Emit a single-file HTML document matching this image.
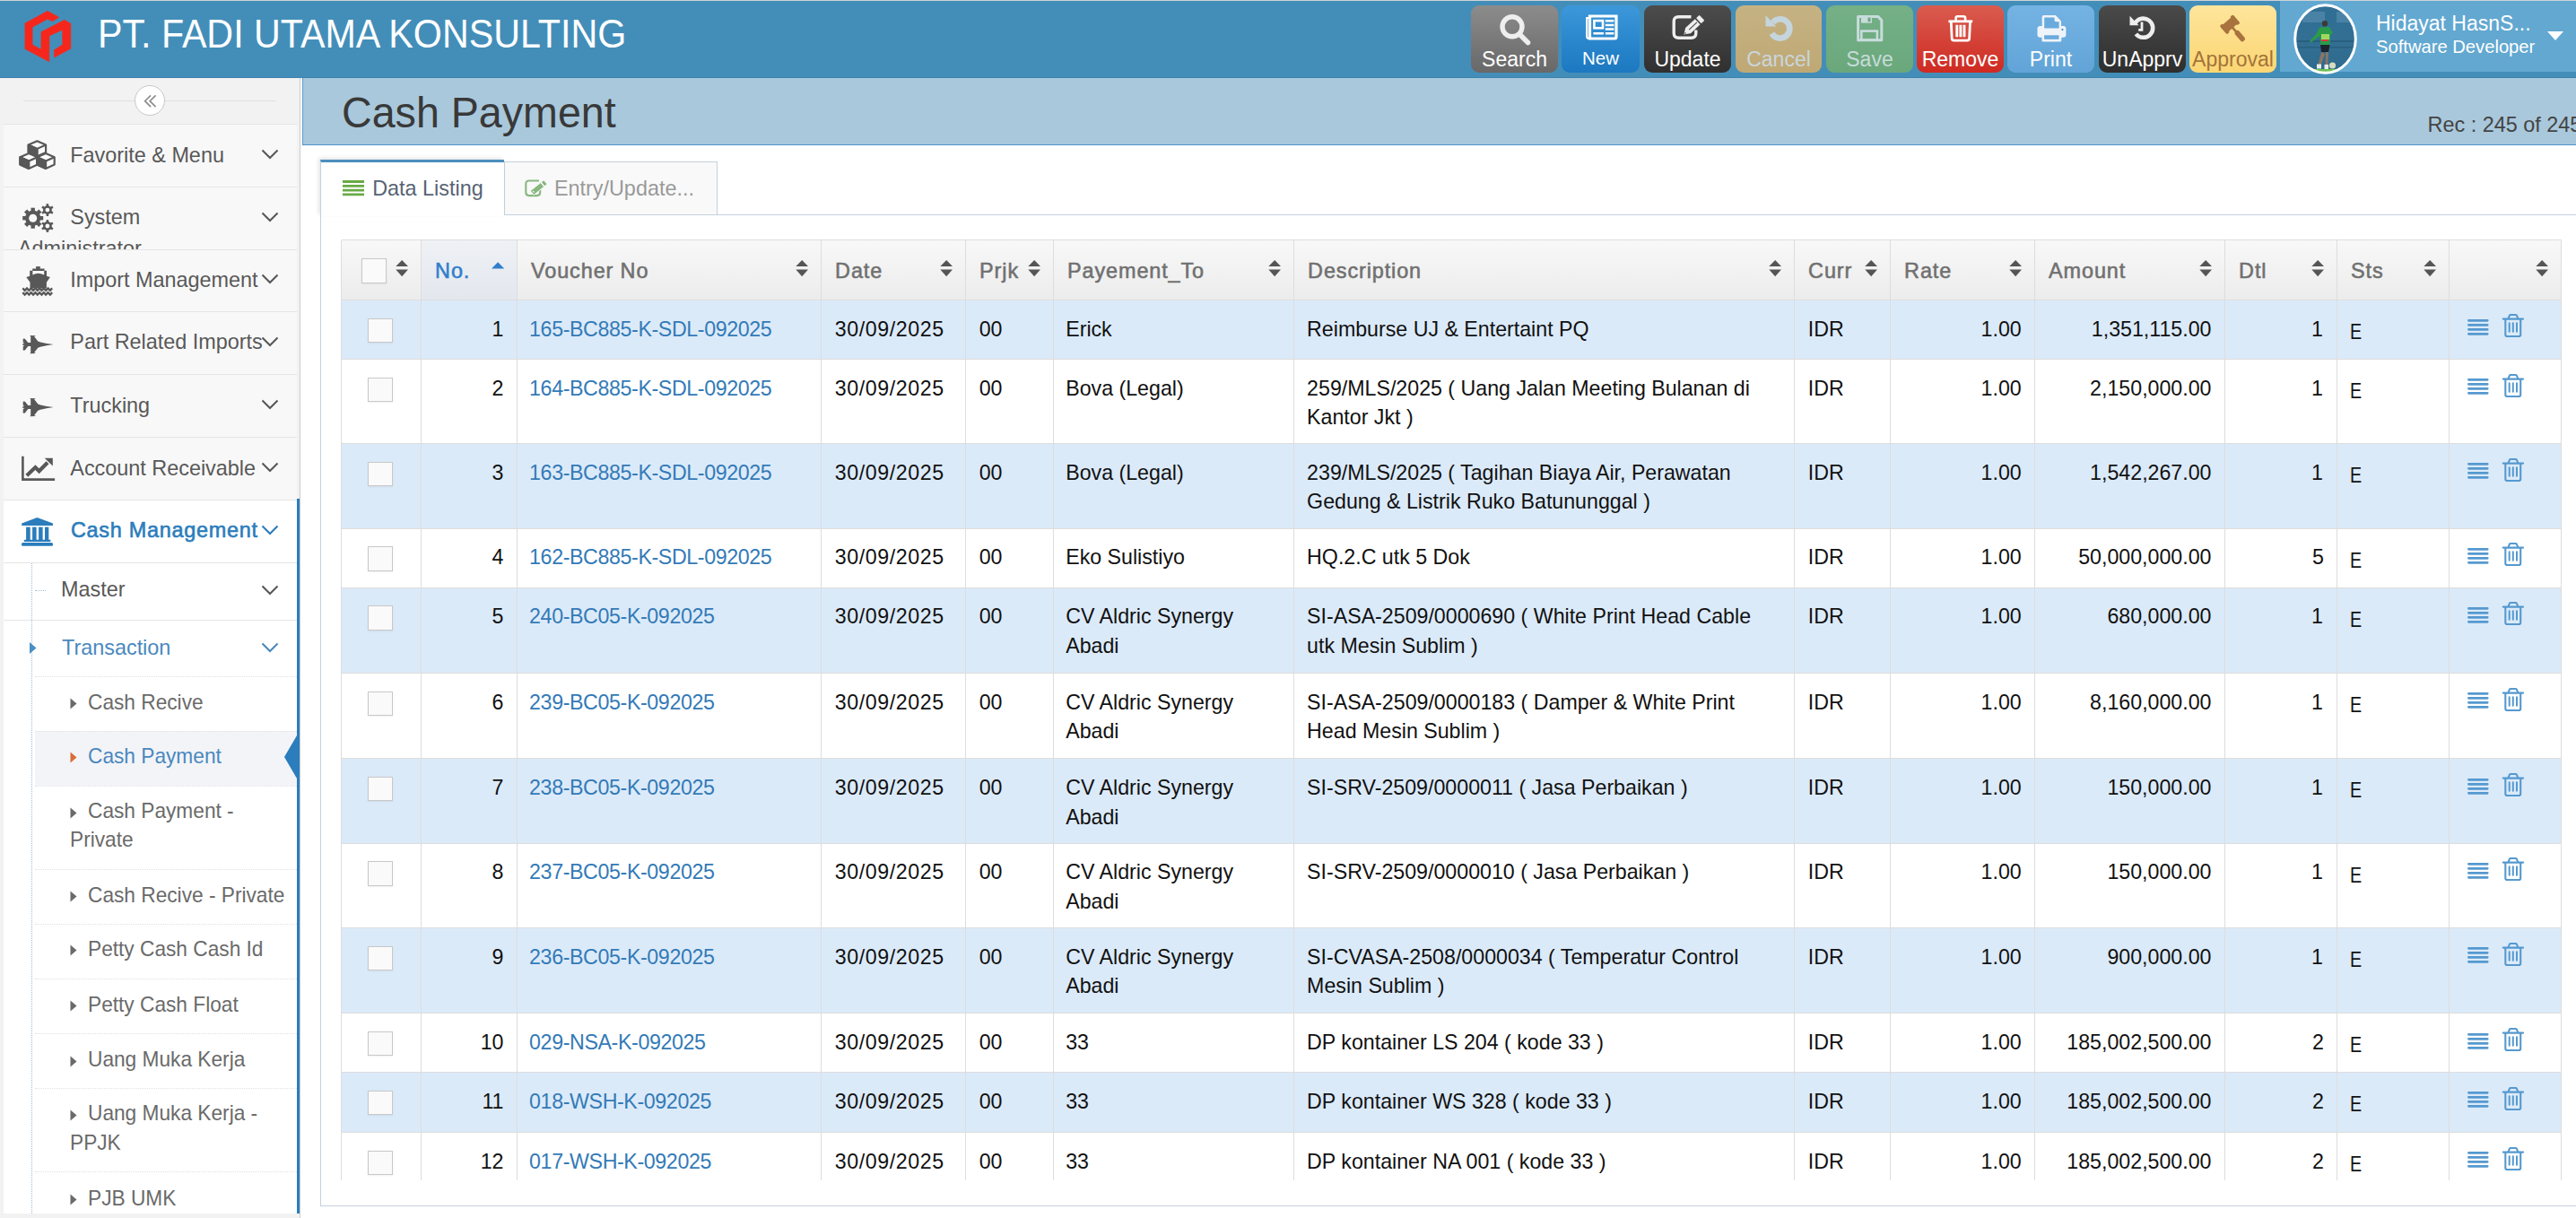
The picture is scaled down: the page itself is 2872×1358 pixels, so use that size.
<!DOCTYPE html><html><head><meta charset="utf-8"><title>Cash Payment</title><style>html,body{margin:0;padding:0;}body{width:2872px;height:1358px;overflow:hidden;position:relative;background:#fff;font-family:"Liberation Sans",sans-serif;}.t{position:absolute;white-space:nowrap;}</style></head><body><div style="position:absolute;left:0px;top:0px;width:2872px;height:1px;background:#cfd3d6;"></div><div style="position:absolute;left:0px;top:1px;width:2872px;height:86px;background:#438eb9;"></div><div style="position:absolute;left:0px;top:86px;width:2872px;height:1px;background:#3d82ad;"></div><svg style="position:absolute;left:0px;top:0px;" width="100" height="87" viewBox="0 0 100 87"><polygon points="53,12.3 65.7,19.3 58.5,23.8 53,21.2 36.1,30.2 36.1,49.7 45.8,55.2 46,35.5 71.8,22.3 78.8,26.3 78.8,54.2 60.6,64 60.3,55.8 69.8,49.7 69.6,33.3 55,40 54.8,68.8 27.9,54.6 27.9,25.9" fill="#f5271c" stroke="#f5271c" stroke-width="0.6" stroke-linejoin="round"/></svg><div class="t" style="left:109.2px;top:10.07px;font-size:44.5px;line-height:55.62px;color:#ffffff;font-weight:normal;transform:scaleX(0.926);transform-origin:0 0;">PT. FADI UTAMA KONSULTING</div><div style="position:absolute;left:1640px;top:6px;width:97px;height:75px;border-radius:9px;background:linear-gradient(#8c8c8c,#686868);"></div><svg style="position:absolute;left:1671.5px;top:15px;overflow:visible;" width="34" height="34" viewBox="0 0 34 34"><circle cx="14" cy="14.8" r="11" fill="none" stroke="#eeeeee" stroke-width="5.4"/><path d="M22.5 23.5 L31.5 32.5" stroke="#eeeeee" stroke-width="5.6" stroke-linecap="round"/></svg><div class="t" style="left:1488.5px;width:400px;text-align:center;top:51.96px;font-size:23px;line-height:28.75px;color:#fff;font-weight:normal;">Search</div><div style="position:absolute;left:1741px;top:6px;width:87px;height:75px;border-radius:9px;background:linear-gradient(#3c98da,#1c78c0);"></div><svg style="position:absolute;left:1767.5px;top:15px;overflow:visible;" width="34" height="34" viewBox="0 0 34 34"><path d="M4.5 3 H34 V26 Q34 28 32 28 H4.5 Z" fill="none" stroke="#fff" stroke-width="3.2"/><path d="M4 5 H1.2 V25.5 Q1.2 28 3.5 28" fill="none" stroke="#fff" stroke-width="2.2"/><rect x="9.4" y="8.1" width="9.6" height="8.2" fill="none" stroke="#fff" stroke-width="2.6"/><path d="M21.8 8.3h9.6M21.8 13.1h9.6M21.8 17.6h9.6M21.8 22.3h9.6M8.4 22.3h11.6" stroke="#fff" stroke-width="2.5"/></svg><div class="t" style="left:1584.5px;width:400px;text-align:center;top:52.09px;font-size:20.5px;line-height:25.62px;color:#fff;font-weight:normal;">New</div><div style="position:absolute;left:1833px;top:6px;width:97px;height:75px;border-radius:9px;background:linear-gradient(#4c4c4c,#303030);"></div><svg style="position:absolute;left:1864.5px;top:15px;overflow:visible;" width="34" height="34" viewBox="0 0 34 34"><path d="M20.5 3.7 H6.5 Q1.2 3.7 1.2 9 V22 Q1.2 27.2 6.5 27.2 H20.5 Q25.8 27.2 25.8 22 V18.4" fill="none" stroke="#eeeeee" stroke-width="3.4"/><g transform="translate(12.3,23.6) rotate(-43)"><path d="M0 0 L6.5 -4.2 H21 V4.2 H6.5 Z" fill="#eeeeee"/><rect x="22.6" y="-4.2" width="5" height="8.4" rx="1" fill="#eeeeee"/><path d="M8 0 H20" stroke="#3a3a3a" stroke-width="1"/><path d="M1.6 -1 L3.4 0 L1.6 1" fill="#3a3a3a"/></g></svg><div class="t" style="left:1681.5px;width:400px;text-align:center;top:51.96px;font-size:23px;line-height:28.75px;color:#fff;font-weight:normal;">Update</div><div style="position:absolute;left:1935px;top:6px;width:96px;height:75px;border-radius:9px;background:linear-gradient(#c5b283,#bfa874);"></div><svg style="position:absolute;left:1966.0px;top:15px;overflow:visible;" width="34" height="34" viewBox="0 0 34 34"><path d="M10.5 10.02 A10.7 10.7 0 1 1 9.43 22.25" fill="none" stroke="#c5d5dd" stroke-width="6.6"/><path d="M2.5 1.9 V14.4 H14.2 Z" fill="#c5d5dd"/></svg><div class="t" style="left:1783.0px;width:400px;text-align:center;top:51.96px;font-size:23px;line-height:28.75px;color:#c9d6dc;font-weight:normal;">Cancel</div><div style="position:absolute;left:2036px;top:6px;width:97px;height:75px;border-radius:9px;background:linear-gradient(#75b086,#6aa87c);"></div><svg style="position:absolute;left:2067.5px;top:15px;overflow:visible;" width="34" height="34" viewBox="0 0 34 34"><path d="M3.6 3.6 H26 L29.8 7.6 V29.7 H3.6 Z" fill="none" stroke="#c8dcdc" stroke-width="3" stroke-linejoin="round"/><rect x="7" y="3.6" width="12" height="7" fill="#c8dcdc"/><rect x="14.5" y="4.6" width="3" height="4.6" fill="#6aa87c"/><rect x="7.3" y="19.6" width="17.6" height="10" fill="none" stroke="#c8dcdc" stroke-width="2.6"/></svg><div class="t" style="left:1884.5px;width:400px;text-align:center;top:51.96px;font-size:23px;line-height:28.75px;color:#c7dbd9;font-weight:normal;">Save</div><div style="position:absolute;left:2137px;top:6px;width:97px;height:75px;border-radius:9px;background:linear-gradient(#d95c4f,#cf2a22);"></div><svg style="position:absolute;left:2168.5px;top:15px;overflow:visible;" width="34" height="34" viewBox="0 0 34 34"><path d="M3.4 8.8 H30.2" stroke="#fff" stroke-width="2.8"/><path d="M11.6 8.8 V5.2 Q11.6 3.3 13.5 3.3 H20.2 Q22.1 3.3 22.1 5.2 V8.8" fill="none" stroke="#fff" stroke-width="2.6"/><path d="M6.3 9.5 L7.2 28.2 Q7.4 30.2 9.4 30.2 H24.4 Q26.4 30.2 26.6 28.2 L27.5 9.5" fill="none" stroke="#fff" stroke-width="2.8"/><path d="M12.8 12.8V26.2M16.9 12.8V26.2M21 12.8V26.2" stroke="#fff" stroke-width="2.9"/></svg><div class="t" style="left:1985.5px;width:400px;text-align:center;top:51.96px;font-size:23px;line-height:28.75px;color:#fff;font-weight:normal;">Remove</div><div style="position:absolute;left:2238px;top:6px;width:97px;height:75px;border-radius:9px;background:linear-gradient(#74b3e3,#62a4d8);"></div><svg style="position:absolute;left:2269.5px;top:15px;overflow:visible;" width="34" height="34" viewBox="0 0 34 34"><rect x="1.5" y="14" width="31.9" height="12.7" rx="3" fill="#eef4fa"/><path d="M6.7 4 Q6.7 2.1 8.6 2.1 H21.8 L28 8.6 V16.4 H6.7 Z" fill="#eef4fa"/><path d="M9.2 4.5 H20.5 V7.4 Q20.5 9.2 22.3 9.2 H25.6 V16.4 H9.2 Z" fill="#6aaadc"/><rect x="6.5" y="23.6" width="21.8" height="8" rx="1.6" fill="#eef4fa"/><rect x="9.1" y="24.3" width="16.4" height="4.5" fill="#6aaadc"/><circle cx="29.4" cy="18.1" r="1.1" fill="#4f86b0"/></svg><div class="t" style="left:2086.5px;width:400px;text-align:center;top:51.96px;font-size:23px;line-height:28.75px;color:#fff;font-weight:normal;">Print</div><div style="position:absolute;left:2340px;top:6px;width:97px;height:75px;border-radius:9px;background:linear-gradient(#4a4a4a,#2e2e2e);"></div><svg style="position:absolute;left:2371.5px;top:13.5px;overflow:visible;" width="34" height="34" viewBox="0 0 34 34"><path d="M8.42 11.90 A10.6 10.6 0 1 1 9.36 23.87" fill="none" stroke="#eeeeee" stroke-width="4.6"/><path d="M2.5 3.8 V14.3 H12.6 Z" fill="#eeeeee"/><path d="M16 10.6 V19.3 H12.2" fill="none" stroke="#eeeeee" stroke-width="2.8"/></svg><div class="t" style="left:2188.5px;width:400px;text-align:center;top:51.96px;font-size:23px;line-height:28.75px;color:#fff;font-weight:normal;">UnApprv</div><div style="position:absolute;left:2441px;top:6px;width:97px;height:75px;border-radius:9px;background:linear-gradient(#fee59c,#fbd673);"></div><svg style="position:absolute;left:2472.5px;top:15px;overflow:visible;" width="34" height="34" viewBox="0 0 34 34"><g transform="translate(13.1,12.3) rotate(49)" fill="#a8733e"><rect x="-5" y="-8" width="10" height="16"/><rect x="-6.3" y="-9.8" width="12.6" height="4.2" rx="1.6"/><rect x="-6.3" y="5.6" width="12.6" height="4.2" rx="1.6"/><rect x="4" y="-1.4" width="7" height="2.8"/><rect x="10" y="-2.9" width="14" height="5.8" rx="2.4"/></g></svg><div class="t" style="left:2289.5px;width:400px;text-align:center;top:51.96px;font-size:23px;line-height:28.75px;color:#a3733a;font-weight:normal;">Approval</div><div style="position:absolute;left:2542px;top:1px;width:330px;height:79px;background:#62a8d1;"></div><svg style="position:absolute;left:2557px;top:4px;" width="71" height="79" viewBox="0 0 71 79"><defs><clipPath id="av"><ellipse cx="35.5" cy="39.5" rx="33" ry="37"/></clipPath><linearGradient id="avg" x1="0" y1="0" x2="0" y2="1"><stop offset="0" stop-color="#2f6e95"/><stop offset="0.5" stop-color="#336f93"/><stop offset="1" stop-color="#2d6a8c"/></linearGradient></defs><g clip-path="url(#av)"><rect width="71" height="79" fill="url(#avg)"/><rect x="10" y="9" width="25" height="12" fill="#5b8fb0" opacity="0.6"/><rect x="48" y="9" width="22" height="12" fill="#5b8fb0" opacity="0.6"/><rect x="0" y="41" width="71" height="2" fill="#285f80"/><rect x="0" y="48" width="71" height="1.5" fill="#285f80"/><circle cx="35" cy="22.3" r="3.2" fill="#3b3a36"/><path d="M29 26.5 L40 26 L44 33 L41.5 34 L40.5 46 L30 46 L29.5 36 L19 43.5 L18 42 L26 33 Z" fill="#2a9c48"/><rect x="31" y="34" width="9" height="6" fill="#9fd860"/><rect x="31" y="40" width="8" height="2" fill="#d04040"/><path d="M30 46 H40.5 L39 54 H31 Z" fill="#1a2530"/><path d="M31 54 L27.5 68 L30.5 69 L35 56 Z M36 54 L35.5 69 L38.5 69 L39 54 Z" fill="#8a7565"/><rect x="26" y="67.5" width="5" height="5" fill="#e8ece8"/><rect x="34.5" y="68" width="4.5" height="5" fill="#e8ece8"/><circle cx="43.5" cy="69" r="3.6" fill="#d8dcc0"/><rect x="0" y="73" width="71" height="6" fill="#6cc24f"/></g><ellipse cx="35.5" cy="39.5" rx="33.8" ry="37.8" fill="none" stroke="#ffffff" stroke-width="3"/></svg><div class="t" style="left:2649px;top:12.06px;font-size:23px;line-height:28.75px;color:#ffffff;font-weight:normal;">Hidayat HasnS...</div><div class="t" style="left:2649px;top:39.98px;font-size:20.2px;line-height:25.25px;color:#ffffff;font-weight:normal;">Software Developer</div><svg style="position:absolute;left:2840px;top:35px;" width="18" height="11" viewBox="0 0 18 11"><path d="M0 0 H18 L9 10 Z" fill="#fff"/></svg><div style="position:absolute;left:0px;top:87px;width:334px;height:1271px;background:#f2f2f2;"></div><div style="position:absolute;left:334px;top:87px;width:1px;height:1271px;background:#cccccc;"></div><div style="position:absolute;left:26px;top:112px;width:282px;height:1px;background:#e0e0e0;"></div><div style="position:absolute;left:150px;top:95px;width:32px;height:32px;border-radius:50%;border:1px solid #c8c8c8;background:#fff;"></div><svg style="position:absolute;left:158px;top:103px;" width="18" height="18" viewBox="0 0 18 18"><path d="M10.1 3.3 L3.6 9.7 L10.1 16.1 M15.6 3.3 L9.1 9.7 L15.6 16.1" fill="none" stroke="#8f8f8f" stroke-width="1.7"/></svg><div style="position:absolute;left:4px;top:138px;width:327px;height:70.4px;background:#f8f8f8;border-top:1px solid #e5e5e5;box-sizing:border-box;"></div><svg style="position:absolute;left:0;top:138px;overflow:visible" width="80" height="70.4" viewBox="0 138 80 70.4"><path d="M41.4,157.3 L51.099999999999994,161.60000000000002 L51.099999999999994,170.00000000000003 L41.4,174.3 L31.7,170.00000000000003 L31.7,161.60000000000002 Z" fill="#fcfcfc" stroke="#585858" stroke-width="2.2" stroke-linejoin="round"/><path d="M31.7,161.60000000000002 L41.4,165.9 L41.4,174.3 L31.7,170.00000000000003 Z" fill="#585858" stroke="#585858" stroke-width="2.2" stroke-linejoin="round"/><path d="M31.7,161.60000000000002 L41.4,165.9 L51.099999999999994,161.60000000000002 M41.4,165.9 V174.3" fill="none" stroke="#585858" stroke-width="2.2"/><path d="M32.1,170.9 L41.8,175.20000000000002 L41.8,183.60000000000002 L32.1,187.9 L22.400000000000002,183.60000000000002 L22.400000000000002,175.20000000000002 Z" fill="#fcfcfc" stroke="#585858" stroke-width="2.2" stroke-linejoin="round"/><path d="M22.400000000000002,175.20000000000002 L32.1,179.5 L32.1,187.9 L22.400000000000002,183.60000000000002 Z" fill="#585858" stroke="#585858" stroke-width="2.2" stroke-linejoin="round"/><path d="M22.400000000000002,175.20000000000002 L32.1,179.5 L41.8,175.20000000000002 M32.1,179.5 V187.9" fill="none" stroke="#585858" stroke-width="2.2"/><path d="M51.0,170.9 L60.7,175.20000000000002 L60.7,183.60000000000002 L51.0,187.9 L41.3,183.60000000000002 L41.3,175.20000000000002 Z" fill="#fcfcfc" stroke="#585858" stroke-width="2.2" stroke-linejoin="round"/><path d="M41.3,175.20000000000002 L51.0,179.5 L51.0,187.9 L41.3,183.60000000000002 Z" fill="#585858" stroke="#585858" stroke-width="2.2" stroke-linejoin="round"/><path d="M41.3,175.20000000000002 L51.0,179.5 L60.7,175.20000000000002 M51.0,179.5 V187.9" fill="none" stroke="#585858" stroke-width="2.2"/></svg><div class="t" style="left:78.3px;top:158.57px;font-size:23.4px;line-height:29.25px;color:#585858;font-weight:normal;">Favorite &amp; Menu</div><svg style="position:absolute;left:291px;top:165.7px;overflow:visible;" width="20" height="12" viewBox="0 0 20 12"><path d="M1.5 1.5 L10 10 L18.5 1.5" fill="none" stroke="#585858" stroke-width="2.1"/></svg><div style="position:absolute;left:4px;top:208.4px;width:327px;height:69.79999999999998px;background:#f8f8f8;border-top:1px solid #e5e5e5;box-sizing:border-box;"></div><svg style="position:absolute;left:0;top:208.4px;overflow:visible" width="80" height="69.79999999999998" viewBox="0 208.4 80 69.79999999999998"><circle cx="36.7" cy="243.60000000000002" r="8.6" fill="#585858"/><rect x="34.5" y="232.10000000000002" width="4.4" height="11.5" fill="#585858" transform="rotate(0.0 36.7 243.60000000000002)"/><rect x="34.5" y="232.10000000000002" width="4.4" height="11.5" fill="#585858" transform="rotate(45.0 36.7 243.60000000000002)"/><rect x="34.5" y="232.10000000000002" width="4.4" height="11.5" fill="#585858" transform="rotate(90.0 36.7 243.60000000000002)"/><rect x="34.5" y="232.10000000000002" width="4.4" height="11.5" fill="#585858" transform="rotate(135.0 36.7 243.60000000000002)"/><rect x="34.5" y="232.10000000000002" width="4.4" height="11.5" fill="#585858" transform="rotate(180.0 36.7 243.60000000000002)"/><rect x="34.5" y="232.10000000000002" width="4.4" height="11.5" fill="#585858" transform="rotate(225.0 36.7 243.60000000000002)"/><rect x="34.5" y="232.10000000000002" width="4.4" height="11.5" fill="#585858" transform="rotate(270.0 36.7 243.60000000000002)"/><rect x="34.5" y="232.10000000000002" width="4.4" height="11.5" fill="#585858" transform="rotate(315.0 36.7 243.60000000000002)"/><circle cx="36.7" cy="243.60000000000002" r="4.5" fill="#f8f8f8"/><circle cx="52.9" cy="234.5" r="4.9" fill="#585858"/><rect x="51.6" y="227.6" width="2.6" height="6.9" fill="#585858" transform="rotate(0.0 52.9 234.5)"/><rect x="51.6" y="227.6" width="2.6" height="6.9" fill="#585858" transform="rotate(60.0 52.9 234.5)"/><rect x="51.6" y="227.6" width="2.6" height="6.9" fill="#585858" transform="rotate(120.0 52.9 234.5)"/><rect x="51.6" y="227.6" width="2.6" height="6.9" fill="#585858" transform="rotate(180.0 52.9 234.5)"/><rect x="51.6" y="227.6" width="2.6" height="6.9" fill="#585858" transform="rotate(240.0 52.9 234.5)"/><rect x="51.6" y="227.6" width="2.6" height="6.9" fill="#585858" transform="rotate(300.0 52.9 234.5)"/><circle cx="52.9" cy="234.5" r="2.4" fill="#f8f8f8"/><circle cx="52.9" cy="252.4" r="4.9" fill="#585858"/><rect x="51.6" y="245.5" width="2.6" height="6.9" fill="#585858" transform="rotate(0.0 52.9 252.4)"/><rect x="51.6" y="245.5" width="2.6" height="6.9" fill="#585858" transform="rotate(60.0 52.9 252.4)"/><rect x="51.6" y="245.5" width="2.6" height="6.9" fill="#585858" transform="rotate(120.0 52.9 252.4)"/><rect x="51.6" y="245.5" width="2.6" height="6.9" fill="#585858" transform="rotate(180.0 52.9 252.4)"/><rect x="51.6" y="245.5" width="2.6" height="6.9" fill="#585858" transform="rotate(240.0 52.9 252.4)"/><rect x="51.6" y="245.5" width="2.6" height="6.9" fill="#585858" transform="rotate(300.0 52.9 252.4)"/><circle cx="52.9" cy="252.4" r="2.4" fill="#f8f8f8"/></svg><div class="t" style="left:78.3px;top:227.77px;font-size:23.4px;line-height:29.25px;color:#585858;font-weight:normal;">System</div><svg style="position:absolute;left:291px;top:235.8px;overflow:visible;" width="20" height="12" viewBox="0 0 20 12"><path d="M1.5 1.5 L10 10 L18.5 1.5" fill="none" stroke="#585858" stroke-width="2.1"/></svg><div style="position:absolute;left:4px;top:278.2px;width:327px;height:69.0px;background:#f8f8f8;border-top:1px solid #e5e5e5;box-sizing:border-box;"></div><svg style="position:absolute;left:0;top:278.2px;overflow:visible" width="80" height="69.0" viewBox="0 278.2 80 69.0"><rect x="40.1" y="297.3" width="4.7" height="2.8" fill="#585858"/><path d="M36.2 299.8 H49.5 V302.0 H52 V308.7 H33.2 V302.0 H36.2 Z" fill="#585858"/><path d="M36.4 302.2 H49.2 V306.59999999999997 Q42.5 303.2 36.4 306.59999999999997 Z" fill="#f8f8f8"/><path d="M29.3 309.09999999999997 Q42.5 303.8 55.9 309.09999999999997 L51.9 315.0 V321.7 H33.5 V315.0 Z" fill="#585858"/><polyline points="25.30,321.60 27.65,324.00 30.00,321.60 32.35,324.00 34.70,321.60 37.05,324.00 39.40,321.60 41.75,324.00 44.10,321.60 46.45,324.00 48.80,321.60 51.15,324.00 53.50,321.60 55.85,324.00 58.20,321.60" fill="none" stroke="#585858" stroke-width="2.3" stroke-linejoin="miter"/><polyline points="25.30,326.30 27.65,328.70 30.00,326.30 32.35,328.70 34.70,326.30 37.05,328.70 39.40,326.30 41.75,328.70 44.10,326.30 46.45,328.70 48.80,326.30 51.15,328.70 53.50,326.30 55.85,328.70 58.20,326.30" fill="none" stroke="#585858" stroke-width="2.3" stroke-linejoin="miter"/></svg><div class="t" style="left:78.3px;top:297.57px;font-size:23.4px;line-height:29.25px;color:#585858;font-weight:normal;">Import Management</div><svg style="position:absolute;left:291px;top:305.2px;overflow:visible;" width="20" height="12" viewBox="0 0 20 12"><path d="M1.5 1.5 L10 10 L18.5 1.5" fill="none" stroke="#585858" stroke-width="2.1"/></svg><div style="position:absolute;left:4px;top:347.2px;width:327px;height:70.19999999999999px;background:#f8f8f8;border-top:1px solid #e5e5e5;box-sizing:border-box;"></div><svg style="position:absolute;left:0;top:347.2px;overflow:visible" width="80" height="70.19999999999999" viewBox="0 347.2 80 70.19999999999999"><path d="M59.60,384.30 L52.00,383.10 L45.00,381.70 L42.30,380.60 L38.20,375.40 L39.90,374.50 L33.20,374.20 L34.20,375.20 L34.20,382.30 L31.30,382.30 L27.80,377.90 L26.20,377.70 L25.60,378.50 L25.80,382.50 L27.50,383.30 L25.10,383.60 L25.10,385.00 L27.50,385.30 L25.80,386.10 L25.60,390.10 L26.20,390.90 L27.80,390.70 L31.30,386.30 L34.20,386.30 L34.20,393.40 L33.20,394.40 L39.90,394.10 L38.20,393.20 L42.30,388.00 L45.00,386.90 L52.00,385.50 L59.60,384.30 Z" fill="#585858"/></svg><div class="t" style="left:78.3px;top:367.37px;font-size:23.4px;line-height:29.25px;color:#585858;font-weight:normal;">Part Related Imports</div><svg style="position:absolute;left:291px;top:374.79999999999995px;overflow:visible;" width="20" height="12" viewBox="0 0 20 12"><path d="M1.5 1.5 L10 10 L18.5 1.5" fill="none" stroke="#585858" stroke-width="2.1"/></svg><div style="position:absolute;left:4px;top:417.4px;width:327px;height:69.90000000000003px;background:#f8f8f8;border-top:1px solid #e5e5e5;box-sizing:border-box;"></div><svg style="position:absolute;left:0;top:417.4px;overflow:visible" width="80" height="69.90000000000003" viewBox="0 417.4 80 69.90000000000003"><path d="M59.60,454.50 L52.00,453.30 L45.00,451.90 L42.30,450.80 L38.20,445.60 L39.90,444.70 L33.20,444.40 L34.20,445.40 L34.20,452.50 L31.30,452.50 L27.80,448.10 L26.20,447.90 L25.60,448.70 L25.80,452.70 L27.50,453.50 L25.10,453.80 L25.10,455.20 L27.50,455.50 L25.80,456.30 L25.60,460.30 L26.20,461.10 L27.80,460.90 L31.30,456.50 L34.20,456.50 L34.20,463.60 L33.20,464.60 L39.90,464.30 L38.20,463.40 L42.30,458.20 L45.00,457.10 L52.00,455.70 L59.60,454.50 Z" fill="#585858"/></svg><div class="t" style="left:78.3px;top:438.37px;font-size:23.4px;line-height:29.25px;color:#585858;font-weight:normal;">Trucking</div><svg style="position:absolute;left:291px;top:444.85px;overflow:visible;" width="20" height="12" viewBox="0 0 20 12"><path d="M1.5 1.5 L10 10 L18.5 1.5" fill="none" stroke="#585858" stroke-width="2.1"/></svg><div style="position:absolute;left:4px;top:487.3px;width:327px;height:69.90000000000003px;background:#f8f8f8;border-top:1px solid #e5e5e5;box-sizing:border-box;"></div><svg style="position:absolute;left:0;top:487.3px;overflow:visible" width="80" height="69.90000000000003" viewBox="0 487.3 80 69.90000000000003"><path d="M25.4 509.0 V534.9 H61.1" fill="none" stroke="#585858" stroke-width="2.6"/><path d="M29.8 530.5 L39.4 521.4 L43.6 525.5 L53 516.1" fill="none" stroke="#585858" stroke-width="4.2"/><path d="M49.7 511.0 H58.8 V519.9 Z" fill="#585858"/></svg><div class="t" style="left:78.3px;top:508.07px;font-size:23.4px;line-height:29.25px;color:#585858;font-weight:normal;">Account Receivable</div><svg style="position:absolute;left:291px;top:514.75px;overflow:visible;" width="20" height="12" viewBox="0 0 20 12"><path d="M1.5 1.5 L10 10 L18.5 1.5" fill="none" stroke="#585858" stroke-width="2.1"/></svg><div style="position:absolute;left:4px;top:208.4px;width:327px;height:69.8px;overflow:hidden;"><div class="t" style="left:16px;top:54.17px;font-size:23.4px;line-height:29.25px;color:#585858;font-weight:normal;">Administrator</div></div><div style="position:absolute;left:4px;top:557.2px;width:327px;height:796px;background:#ffffff;border-top:1px solid #e5e5e5;box-sizing:border-box;"></div><div style="position:absolute;left:331px;top:556px;width:3px;height:797px;background:#2b7dbc;"></div><svg style="position:absolute;left:0;top:557px;" width="80" height="70" viewBox="0 557 80 70"><g fill="#2b7dbc"><path d="M41.5 577 L59 583.6 V586 H24.2 V583.6 Z"/><rect x="29.1" y="587.6" width="4.6" height="14.4"/><rect x="36.1" y="587.6" width="4.5" height="14.4"/><rect x="43.1" y="587.6" width="4.5" height="14.4"/><rect x="50" y="587.6" width="4.3" height="14.4"/><rect x="26.7" y="601.8" width="29.8" height="2.1" rx="0.8"/><rect x="24" y="604.9" width="35" height="3.9" rx="1.6"/></g></svg><div class="t" style="left:78.9px;top:576.87px;font-size:23.4px;line-height:29.25px;color:#2b7dbc;font-weight:normal;-webkit-text-stroke:0.6px currentColor;letter-spacing:0.75px;">Cash Management</div><svg style="position:absolute;left:291px;top:585px;overflow:visible;" width="20" height="12" viewBox="0 0 20 12"><path d="M1.5 1.5 L10 10 L18.5 1.5" fill="none" stroke="#2b7dbc" stroke-width="2.1"/></svg><div style="position:absolute;left:4px;top:627.2px;width:327px;height:1px;background:#e5e5e5;"></div><div style="position:absolute;left:4px;top:690.6px;width:327px;height:1px;background:#e5e5e5;"></div><div style="position:absolute;left:35px;top:628px;width:0;height:725px;border-left:1px dotted #9dbdd6;"></div><div style="position:absolute;left:39px;top:658px;width:12px;height:0;border-top:1px dotted #9dbdd6;"></div><div class="t" style="left:68px;top:643.47px;font-size:23.4px;line-height:29.25px;color:#585858;font-weight:normal;">Master</div><svg style="position:absolute;left:291px;top:652px;overflow:visible;" width="20" height="12" viewBox="0 0 20 12"><path d="M1.5 1.5 L10 10 L18.5 1.5" fill="none" stroke="#585858" stroke-width="2.1"/></svg><svg style="position:absolute;left:33px;top:716px;" width="8" height="13" viewBox="0 0 8 13"><path d="M0 0 L7.5 6.5 L0 13 Z" fill="#4a8fc4"/></svg><div class="t" style="left:69px;top:707.77px;font-size:23.4px;line-height:29.25px;color:#4a88be;font-weight:normal;">Transaction</div><svg style="position:absolute;left:291px;top:716px;overflow:visible;" width="20" height="12" viewBox="0 0 20 12"><path d="M1.5 1.5 L10 10 L18.5 1.5" fill="none" stroke="#4a88be" stroke-width="2.1"/></svg><div style="position:absolute;left:39px;top:754px;width:292px;height:0;border-top:1px dotted #e0e0e0;"></div><svg style="position:absolute;left:77.5px;top:778.2px;" width="8" height="13" viewBox="0 0 8 13"><path d="M0.5 0.5 L7.5 6.5 L0.5 12.5 Z" fill="#6a6a6a"/></svg><div class="t" style="left:98.1px;top:768.87px;font-size:23.4px;line-height:29.25px;color:#6a6a6a;font-weight:normal;transform:scaleX(0.97);transform-origin:0 0;">Cash Recive</div><div style="position:absolute;left:39px;top:815px;width:292px;height:61px;background:#f3f4f8;"></div><div style="position:absolute;left:39px;top:815px;width:292px;height:0;border-top:1px dotted #e0e0e0;"></div><svg style="position:absolute;left:77.5px;top:838.3000000000001px;" width="8" height="13" viewBox="0 0 8 13"><path d="M0.5 0.5 L7.5 6.5 L0.5 12.5 Z" fill="#d86d38"/></svg><div class="t" style="left:98.1px;top:828.97px;font-size:23.4px;line-height:29.25px;color:#4a88be;font-weight:normal;transform:scaleX(0.97);transform-origin:0 0;">Cash Payment</div><div style="position:absolute;left:39px;top:876px;width:292px;height:0;border-top:1px dotted #e0e0e0;"></div><svg style="position:absolute;left:77.5px;top:899.6px;" width="8" height="13" viewBox="0 0 8 13"><path d="M0.5 0.5 L7.5 6.5 L0.5 12.5 Z" fill="#6a6a6a"/></svg><div class="t" style="left:98.1px;top:890.27px;font-size:23.4px;line-height:29.25px;color:#6a6a6a;font-weight:normal;transform:scaleX(0.97);transform-origin:0 0;">Cash Payment -</div><div class="t" style="left:78px;top:922.47px;font-size:23.4px;line-height:29.25px;color:#6a6a6a;font-weight:normal;transform:scaleX(0.97);transform-origin:0 0;">Private</div><div style="position:absolute;left:39px;top:969px;width:292px;height:0;border-top:1px dotted #e0e0e0;"></div><svg style="position:absolute;left:77.5px;top:993.2px;" width="8" height="13" viewBox="0 0 8 13"><path d="M0.5 0.5 L7.5 6.5 L0.5 12.5 Z" fill="#6a6a6a"/></svg><div class="t" style="left:98.1px;top:983.87px;font-size:23.4px;line-height:29.25px;color:#6a6a6a;font-weight:normal;transform:scaleX(0.97);transform-origin:0 0;">Cash Recive - Private</div><div style="position:absolute;left:39px;top:1030px;width:292px;height:0;border-top:1px dotted #e0e0e0;"></div><svg style="position:absolute;left:77.5px;top:1053.1999999999998px;" width="8" height="13" viewBox="0 0 8 13"><path d="M0.5 0.5 L7.5 6.5 L0.5 12.5 Z" fill="#6a6a6a"/></svg><div class="t" style="left:98.1px;top:1043.87px;font-size:23.4px;line-height:29.25px;color:#6a6a6a;font-weight:normal;transform:scaleX(0.97);transform-origin:0 0;">Petty Cash Cash Id</div><div style="position:absolute;left:39px;top:1091.4px;width:292px;height:0;border-top:1px dotted #e0e0e0;"></div><svg style="position:absolute;left:77.5px;top:1115.3999999999999px;" width="8" height="13" viewBox="0 0 8 13"><path d="M0.5 0.5 L7.5 6.5 L0.5 12.5 Z" fill="#6a6a6a"/></svg><div class="t" style="left:98.1px;top:1106.07px;font-size:23.4px;line-height:29.25px;color:#6a6a6a;font-weight:normal;transform:scaleX(0.97);transform-origin:0 0;">Petty Cash Float</div><div style="position:absolute;left:39px;top:1152.3px;width:292px;height:0;border-top:1px dotted #e0e0e0;"></div><svg style="position:absolute;left:77.5px;top:1176.8px;" width="8" height="13" viewBox="0 0 8 13"><path d="M0.5 0.5 L7.5 6.5 L0.5 12.5 Z" fill="#6a6a6a"/></svg><div class="t" style="left:98.1px;top:1167.47px;font-size:23.4px;line-height:29.25px;color:#6a6a6a;font-weight:normal;transform:scaleX(0.97);transform-origin:0 0;">Uang Muka Kerja</div><div style="position:absolute;left:39px;top:1213px;width:292px;height:0;border-top:1px dotted #e0e0e0;"></div><svg style="position:absolute;left:77.5px;top:1236.8px;" width="8" height="13" viewBox="0 0 8 13"><path d="M0.5 0.5 L7.5 6.5 L0.5 12.5 Z" fill="#6a6a6a"/></svg><div class="t" style="left:98.1px;top:1227.47px;font-size:23.4px;line-height:29.25px;color:#6a6a6a;font-weight:normal;transform:scaleX(0.97);transform-origin:0 0;">Uang Muka Kerja -</div><div class="t" style="left:78px;top:1260.17px;font-size:23.4px;line-height:29.25px;color:#6a6a6a;font-weight:normal;transform:scaleX(0.97);transform-origin:0 0;">PPJK</div><div style="position:absolute;left:39px;top:1306.4px;width:292px;height:0;border-top:1px dotted #e0e0e0;"></div><svg style="position:absolute;left:77.5px;top:1330.8999999999999px;" width="8" height="13" viewBox="0 0 8 13"><path d="M0.5 0.5 L7.5 6.5 L0.5 12.5 Z" fill="#6a6a6a"/></svg><div class="t" style="left:98.1px;top:1321.57px;font-size:23.4px;line-height:29.25px;color:#6a6a6a;font-weight:normal;transform:scaleX(0.97);transform-origin:0 0;">PJB UMK</div><svg style="position:absolute;left:317px;top:820px;" width="14" height="48" viewBox="0 0 14 48"><path d="M14 0 L0 24 L14 48 Z" fill="#2b7dbc"/></svg><div style="position:absolute;left:0px;top:1353px;width:334px;height:5px;background:#f2f2f2;"></div><div style="position:absolute;left:337px;top:87px;width:2535px;height:74px;background:#a9c8dc;border-left:1.2px solid #5a9bd0;box-sizing:border-box;"></div><div style="position:absolute;left:337px;top:160.5px;width:2535px;height:1.2px;background:#4e92c9;"></div><div class="t" style="left:380.5px;top:94.77px;font-size:48.3px;line-height:60.38px;color:#393939;font-weight:normal;transform:scaleX(0.965);transform-origin:0 0;">Cash Payment</div><div class="t" style="left:2706.6px;top:125.27px;font-size:23.4px;line-height:29.25px;color:#444444;font-weight:normal;">Rec : 245 of 245</div><div style="position:absolute;left:357px;top:238.5px;width:2515px;height:1.5px;background:#c5d0dc;"></div><div style="position:absolute;left:357px;top:238px;width:1px;height:1107px;background:#c5d0dc;"></div><div style="position:absolute;left:357px;top:1344px;width:2515px;height:1.2px;background:#c5d0dc;"></div><div style="position:absolute;left:561.6px;top:180.4px;width:238px;height:59px;background:#f9f9f9;border:1px solid #c5d0dc;border-bottom:none;box-sizing:border-box;"></div><div style="position:absolute;left:357px;top:178px;width:204.6px;height:63px;background:#fff;border-top:3px solid #4c8fbd;border-left:1px solid #c5d0dc;box-sizing:border-box;box-shadow:-2px -2px 4px rgba(0,0,0,0.10);"></div><svg style="position:absolute;left:382px;top:201px;" width="24" height="18" viewBox="0 0 24 18"><path d="M0 1.5 H24 M0 6.3 H24 M0 11.1 H24 M0 15.9 H24" stroke="#69aa46" stroke-width="2.8"/></svg><div class="t" style="left:415.2px;top:196.37px;font-size:23.4px;line-height:29.25px;color:#576373;font-weight:normal;">Data Listing</div><svg style="position:absolute;left:584.8px;top:199.5px;" width="25" height="20" viewBox="0 0 25 20"><path d="M15.9 1.5 H4.8 Q1.3 1.5 1.3 5 V14.6 Q1.3 18.1 4.8 18.1 H13.7 Q17.2 18.1 17.2 14.6 V11.3" fill="none" stroke="#87b87f" stroke-width="2.1"/><g transform="translate(8.2,15.2) rotate(-39)"><path d="M0 -3 H14.8 V3 H0 Z" fill="#87b87f" stroke="#f9f9f9" stroke-width="0.9"/><rect x="15.5" y="-3" width="3.8" height="6" rx="0.9" fill="#87b87f" stroke="#f9f9f9" stroke-width="0.9"/><path d="M1.5 -1.3 L3.3 0 L1.5 1.3 Z" fill="#f9f9f9"/></g></svg><div class="t" style="left:617.9px;top:196.37px;font-size:23.4px;line-height:29.25px;color:#999999;font-weight:normal;">Entry/Update...</div><div style="position:absolute;left:0;top:0;width:2872px;height:1316.2px;overflow:hidden;"><div style="position:absolute;left:380.5px;top:267.6px;width:2475.0px;height:66.69999999999999px;background:linear-gradient(#f8f8f8,#ececec);"></div><div style="position:absolute;left:469.5px;top:267.6px;width:107.0px;height:66.69999999999999px;background:linear-gradient(#eff1f5,#e3e7ee);"></div><div style="position:absolute;left:380.5px;top:334.3px;width:2475.0px;height:66.09999999999997px;background:#dbeaf9;"></div><div style="position:absolute;left:380.5px;top:494.5px;width:2475.0px;height:94.5px;background:#dbeaf9;"></div><div style="position:absolute;left:380.5px;top:655.2px;width:2475.0px;height:95.29999999999995px;background:#dbeaf9;"></div><div style="position:absolute;left:380.5px;top:845.7px;width:2475.0px;height:94.5px;background:#dbeaf9;"></div><div style="position:absolute;left:380.5px;top:1034.4px;width:2475.0px;height:95.19999999999982px;background:#dbeaf9;"></div><div style="position:absolute;left:380.5px;top:1195.4px;width:2475.0px;height:67.09999999999991px;background:#dbeaf9;"></div><div style="position:absolute;left:380.5px;top:267.1px;width:2475.0px;height:1px;background:#dddddd;"></div><div style="position:absolute;left:380.5px;top:333.8px;width:2475.0px;height:1px;background:#dddddd;"></div><div style="position:absolute;left:380.5px;top:399.9px;width:2475.0px;height:1px;background:#dddddd;"></div><div style="position:absolute;left:380.5px;top:494.0px;width:2475.0px;height:1px;background:#dddddd;"></div><div style="position:absolute;left:380.5px;top:588.5px;width:2475.0px;height:1px;background:#dddddd;"></div><div style="position:absolute;left:380.5px;top:654.7px;width:2475.0px;height:1px;background:#dddddd;"></div><div style="position:absolute;left:380.5px;top:750.0px;width:2475.0px;height:1px;background:#dddddd;"></div><div style="position:absolute;left:380.5px;top:845.2px;width:2475.0px;height:1px;background:#dddddd;"></div><div style="position:absolute;left:380.5px;top:939.7px;width:2475.0px;height:1px;background:#dddddd;"></div><div style="position:absolute;left:380.5px;top:1033.9px;width:2475.0px;height:1px;background:#dddddd;"></div><div style="position:absolute;left:380.5px;top:1129.1px;width:2475.0px;height:1px;background:#dddddd;"></div><div style="position:absolute;left:380.5px;top:1194.9px;width:2475.0px;height:1px;background:#dddddd;"></div><div style="position:absolute;left:380.5px;top:1262.0px;width:2475.0px;height:1px;background:#dddddd;"></div><div style="position:absolute;left:380.0px;top:267.6px;width:1px;height:1058.6px;background:#dddddd;"></div><div style="position:absolute;left:469.0px;top:267.6px;width:1px;height:1058.6px;background:#dddddd;"></div><div style="position:absolute;left:576.0px;top:267.6px;width:1px;height:1058.6px;background:#dddddd;"></div><div style="position:absolute;left:915.0px;top:267.6px;width:1px;height:1058.6px;background:#dddddd;"></div><div style="position:absolute;left:1076.0px;top:267.6px;width:1px;height:1058.6px;background:#dddddd;"></div><div style="position:absolute;left:1174.0px;top:267.6px;width:1px;height:1058.6px;background:#dddddd;"></div><div style="position:absolute;left:1442.0px;top:267.6px;width:1px;height:1058.6px;background:#dddddd;"></div><div style="position:absolute;left:2000.0px;top:267.6px;width:1px;height:1058.6px;background:#dddddd;"></div><div style="position:absolute;left:2107.0px;top:267.6px;width:1px;height:1058.6px;background:#dddddd;"></div><div style="position:absolute;left:2268.0px;top:267.6px;width:1px;height:1058.6px;background:#dddddd;"></div><div style="position:absolute;left:2480.0px;top:267.6px;width:1px;height:1058.6px;background:#dddddd;"></div><div style="position:absolute;left:2605.0px;top:267.6px;width:1px;height:1058.6px;background:#dddddd;"></div><div style="position:absolute;left:2730.0px;top:267.6px;width:1px;height:1058.6px;background:#dddddd;"></div><div style="position:absolute;left:2855.0px;top:267.6px;width:1px;height:1058.6px;background:#dddddd;"></div><div class="t" style="left:485.1px;top:287.97px;font-size:23.4px;line-height:29.25px;color:#307ecc;font-weight:normal;-webkit-text-stroke:0.55px currentColor;letter-spacing:0.9px;">No.</div><div class="t" style="left:592.1px;top:287.97px;font-size:23.4px;line-height:29.25px;color:#707070;font-weight:normal;-webkit-text-stroke:0.55px currentColor;letter-spacing:0.9px;">Voucher No</div><div class="t" style="left:931.1px;top:287.97px;font-size:23.4px;line-height:29.25px;color:#707070;font-weight:normal;-webkit-text-stroke:0.55px currentColor;letter-spacing:0.9px;">Date</div><div class="t" style="left:1092.1px;top:287.97px;font-size:23.4px;line-height:29.25px;color:#707070;font-weight:normal;-webkit-text-stroke:0.55px currentColor;letter-spacing:0.9px;">Prjk</div><div class="t" style="left:1190.1px;top:287.97px;font-size:23.4px;line-height:29.25px;color:#707070;font-weight:normal;-webkit-text-stroke:0.55px currentColor;letter-spacing:0.9px;">Payement_To</div><div class="t" style="left:1458.1px;top:287.97px;font-size:23.4px;line-height:29.25px;color:#707070;font-weight:normal;-webkit-text-stroke:0.55px currentColor;letter-spacing:0.9px;">Description</div><div class="t" style="left:2016.1px;top:287.97px;font-size:23.4px;line-height:29.25px;color:#707070;font-weight:normal;-webkit-text-stroke:0.55px currentColor;letter-spacing:0.9px;">Curr</div><div class="t" style="left:2123.1px;top:287.97px;font-size:23.4px;line-height:29.25px;color:#707070;font-weight:normal;-webkit-text-stroke:0.55px currentColor;letter-spacing:0.9px;">Rate</div><div class="t" style="left:2284.1px;top:287.97px;font-size:23.4px;line-height:29.25px;color:#707070;font-weight:normal;-webkit-text-stroke:0.55px currentColor;letter-spacing:0.9px;">Amount</div><div class="t" style="left:2496.1px;top:287.97px;font-size:23.4px;line-height:29.25px;color:#707070;font-weight:normal;-webkit-text-stroke:0.55px currentColor;letter-spacing:0.9px;">Dtl</div><div class="t" style="left:2621.1px;top:287.97px;font-size:23.4px;line-height:29.25px;color:#707070;font-weight:normal;-webkit-text-stroke:0.55px currentColor;letter-spacing:0.9px;">Sts</div><svg style="position:absolute;left:440.9px;top:289.8px;" width="14.3" height="19" viewBox="0 0 14.3 19"><path d="M7.15 0 L14 7 H0.3 Z M0.3 10.4 H14 L7.15 18.3 Z" fill="#555555"/></svg><svg style="position:absolute;left:547.9000000000001px;top:292.3px;" width="14.3" height="8" viewBox="0 0 14.3 8"><path d="M7.15 0.2 L14.3 7.6 H0 Z" fill="#307ecc"/></svg><svg style="position:absolute;left:886.9000000000001px;top:289.8px;" width="14.3" height="19" viewBox="0 0 14.3 19"><path d="M7.15 0 L14 7 H0.3 Z M0.3 10.4 H14 L7.15 18.3 Z" fill="#555555"/></svg><svg style="position:absolute;left:1047.9px;top:289.8px;" width="14.3" height="19" viewBox="0 0 14.3 19"><path d="M7.15 0 L14 7 H0.3 Z M0.3 10.4 H14 L7.15 18.3 Z" fill="#555555"/></svg><svg style="position:absolute;left:1145.9px;top:289.8px;" width="14.3" height="19" viewBox="0 0 14.3 19"><path d="M7.15 0 L14 7 H0.3 Z M0.3 10.4 H14 L7.15 18.3 Z" fill="#555555"/></svg><svg style="position:absolute;left:1413.9px;top:289.8px;" width="14.3" height="19" viewBox="0 0 14.3 19"><path d="M7.15 0 L14 7 H0.3 Z M0.3 10.4 H14 L7.15 18.3 Z" fill="#555555"/></svg><svg style="position:absolute;left:1971.9px;top:289.8px;" width="14.3" height="19" viewBox="0 0 14.3 19"><path d="M7.15 0 L14 7 H0.3 Z M0.3 10.4 H14 L7.15 18.3 Z" fill="#555555"/></svg><svg style="position:absolute;left:2078.8999999999996px;top:289.8px;" width="14.3" height="19" viewBox="0 0 14.3 19"><path d="M7.15 0 L14 7 H0.3 Z M0.3 10.4 H14 L7.15 18.3 Z" fill="#555555"/></svg><svg style="position:absolute;left:2239.8999999999996px;top:289.8px;" width="14.3" height="19" viewBox="0 0 14.3 19"><path d="M7.15 0 L14 7 H0.3 Z M0.3 10.4 H14 L7.15 18.3 Z" fill="#555555"/></svg><svg style="position:absolute;left:2451.8999999999996px;top:289.8px;" width="14.3" height="19" viewBox="0 0 14.3 19"><path d="M7.15 0 L14 7 H0.3 Z M0.3 10.4 H14 L7.15 18.3 Z" fill="#555555"/></svg><svg style="position:absolute;left:2576.8999999999996px;top:289.8px;" width="14.3" height="19" viewBox="0 0 14.3 19"><path d="M7.15 0 L14 7 H0.3 Z M0.3 10.4 H14 L7.15 18.3 Z" fill="#555555"/></svg><svg style="position:absolute;left:2701.8999999999996px;top:289.8px;" width="14.3" height="19" viewBox="0 0 14.3 19"><path d="M7.15 0 L14 7 H0.3 Z M0.3 10.4 H14 L7.15 18.3 Z" fill="#555555"/></svg><svg style="position:absolute;left:2826.8999999999996px;top:289.8px;" width="14.3" height="19" viewBox="0 0 14.3 19"><path d="M7.15 0 L14 7 H0.3 Z M0.3 10.4 H14 L7.15 18.3 Z" fill="#555555"/></svg><div style="position:absolute;left:403.2px;top:288.2px;width:27.4px;height:27.4px;box-sizing:border-box;border:1.3px solid #c8c8c8;background:#fafafa;box-shadow:0 1px 2px rgba(0,0,0,0.06);"></div><div style="position:absolute;left:410.3px;top:354.5px;width:27.4px;height:27.4px;box-sizing:border-box;border:1.3px solid #c8c8c8;background:#fafafa;box-shadow:0 1px 2px rgba(0,0,0,0.06);"></div><div class="t" style="right:2310.5px;top:352.56px;font-size:23.2px;line-height:29.0px;color:#111111;font-weight:normal;text-align:right;">1</div><div class="t" style="left:590.1px;top:352.56px;font-size:23.2px;line-height:29.0px;color:#337ab7;font-weight:normal;letter-spacing:-0.37px;">165-BC885-K-SDL-092025</div><div class="t" style="left:930.7px;top:352.56px;font-size:23.2px;line-height:29.0px;color:#111111;font-weight:normal;letter-spacing:0.6px;">30/09/2025</div><div class="t" style="left:1091.7px;top:352.56px;font-size:23.2px;line-height:29.0px;color:#111111;font-weight:normal;">00</div><div class="t" style="left:1188.2px;top:352.56px;font-size:23.2px;line-height:29.0px;color:#111111;font-weight:normal;">Erick</div><div class="t" style="left:1457.1px;top:352.56px;font-size:23.2px;line-height:29.0px;color:#111111;font-weight:normal;">Reimburse UJ &amp; Entertaint PQ</div><div class="t" style="left:2015.7px;top:352.56px;font-size:23.2px;line-height:29.0px;color:#111111;font-weight:normal;">IDR</div><div class="t" style="right:618.3000000000002px;top:352.56px;font-size:23.2px;line-height:29.0px;color:#111111;font-weight:normal;text-align:right;">1.00</div><div class="t" style="right:406.5px;top:352.56px;font-size:23.2px;line-height:29.0px;color:#111111;font-weight:normal;text-align:right;">1,351,115.00</div><div class="t" style="right:282.0999999999999px;top:352.56px;font-size:23.2px;line-height:29.0px;color:#111111;font-weight:normal;text-align:right;">1</div><div class="t" style="left:2620.4px;top:355.96px;font-size:23.2px;line-height:29.0px;color:#111111;font-weight:normal;transform:scaleX(0.85);transform-origin:0 0;">E</div><svg style="position:absolute;left:2750.5px;top:356.2px;overflow:visible;" width="23.6" height="18" viewBox="0 0 23.6 18"><path d="M1.4 1.3 H22.2 M1.4 6.3 H22.2 M1.4 11.3 H22.2 M1.4 16.3 H22.2" stroke="#5599cf" stroke-width="2.8" stroke-linecap="round"/></svg><svg style="position:absolute;left:2790.2px;top:350.40000000000003px;overflow:visible;" width="24" height="26" viewBox="0 0 24 26"><path d="M0.8 5.6 H23" stroke="#5599cf" stroke-width="2.2" stroke-linecap="round"/><path d="M6.4 5.4 L7.8 2 Q8.2 1.1 9.2 1.1 H14.6 Q15.6 1.1 16 2 L17.4 5.4" fill="none" stroke="#5599cf" stroke-width="2"/><path d="M3.3 6 V22.9 Q3.3 25 5.4 25 H18.1 Q20.2 25 20.2 22.9 V6" fill="none" stroke="#5599cf" stroke-width="2.1"/><path d="M7.7 10.2 V19.8 M11.8 10.2 V19.8 M16 10.2 V19.8" stroke="#5599cf" stroke-width="2" stroke-linecap="round"/></svg><div style="position:absolute;left:410.3px;top:420.59999999999997px;width:27.4px;height:27.4px;box-sizing:border-box;border:1.3px solid #c8c8c8;background:#fafafa;box-shadow:0 1px 2px rgba(0,0,0,0.06);"></div><div class="t" style="right:2310.5px;top:418.66px;font-size:23.2px;line-height:29.0px;color:#111111;font-weight:normal;text-align:right;">2</div><div class="t" style="left:590.1px;top:418.66px;font-size:23.2px;line-height:29.0px;color:#337ab7;font-weight:normal;letter-spacing:-0.37px;">164-BC885-K-SDL-092025</div><div class="t" style="left:930.7px;top:418.66px;font-size:23.2px;line-height:29.0px;color:#111111;font-weight:normal;letter-spacing:0.6px;">30/09/2025</div><div class="t" style="left:1091.7px;top:418.66px;font-size:23.2px;line-height:29.0px;color:#111111;font-weight:normal;">00</div><div class="t" style="left:1188.2px;top:418.66px;font-size:23.2px;line-height:29.0px;color:#111111;font-weight:normal;">Bova (Legal)</div><div class="t" style="left:1457.1px;top:418.66px;font-size:23.2px;line-height:29.0px;color:#111111;font-weight:normal;">259/MLS/2025 ( Uang Jalan Meeting Bulanan di</div><div class="t" style="left:1457.1px;top:451.36px;font-size:23.2px;line-height:29.0px;color:#111111;font-weight:normal;">Kantor Jkt )</div><div class="t" style="left:2015.7px;top:418.66px;font-size:23.2px;line-height:29.0px;color:#111111;font-weight:normal;">IDR</div><div class="t" style="right:618.3000000000002px;top:418.66px;font-size:23.2px;line-height:29.0px;color:#111111;font-weight:normal;text-align:right;">1.00</div><div class="t" style="right:406.5px;top:418.66px;font-size:23.2px;line-height:29.0px;color:#111111;font-weight:normal;text-align:right;">2,150,000.00</div><div class="t" style="right:282.0999999999999px;top:418.66px;font-size:23.2px;line-height:29.0px;color:#111111;font-weight:normal;text-align:right;">1</div><div class="t" style="left:2620.4px;top:422.06px;font-size:23.2px;line-height:29.0px;color:#111111;font-weight:normal;transform:scaleX(0.85);transform-origin:0 0;">E</div><svg style="position:absolute;left:2750.5px;top:422.29999999999995px;overflow:visible;" width="23.6" height="18" viewBox="0 0 23.6 18"><path d="M1.4 1.3 H22.2 M1.4 6.3 H22.2 M1.4 11.3 H22.2 M1.4 16.3 H22.2" stroke="#5599cf" stroke-width="2.8" stroke-linecap="round"/></svg><svg style="position:absolute;left:2790.2px;top:416.5px;overflow:visible;" width="24" height="26" viewBox="0 0 24 26"><path d="M0.8 5.6 H23" stroke="#5599cf" stroke-width="2.2" stroke-linecap="round"/><path d="M6.4 5.4 L7.8 2 Q8.2 1.1 9.2 1.1 H14.6 Q15.6 1.1 16 2 L17.4 5.4" fill="none" stroke="#5599cf" stroke-width="2"/><path d="M3.3 6 V22.9 Q3.3 25 5.4 25 H18.1 Q20.2 25 20.2 22.9 V6" fill="none" stroke="#5599cf" stroke-width="2.1"/><path d="M7.7 10.2 V19.8 M11.8 10.2 V19.8 M16 10.2 V19.8" stroke="#5599cf" stroke-width="2" stroke-linecap="round"/></svg><div style="position:absolute;left:410.3px;top:514.7px;width:27.4px;height:27.4px;box-sizing:border-box;border:1.3px solid #c8c8c8;background:#fafafa;box-shadow:0 1px 2px rgba(0,0,0,0.06);"></div><div class="t" style="right:2310.5px;top:512.76px;font-size:23.2px;line-height:29.0px;color:#111111;font-weight:normal;text-align:right;">3</div><div class="t" style="left:590.1px;top:512.76px;font-size:23.2px;line-height:29.0px;color:#337ab7;font-weight:normal;letter-spacing:-0.37px;">163-BC885-K-SDL-092025</div><div class="t" style="left:930.7px;top:512.76px;font-size:23.2px;line-height:29.0px;color:#111111;font-weight:normal;letter-spacing:0.6px;">30/09/2025</div><div class="t" style="left:1091.7px;top:512.76px;font-size:23.2px;line-height:29.0px;color:#111111;font-weight:normal;">00</div><div class="t" style="left:1188.2px;top:512.76px;font-size:23.2px;line-height:29.0px;color:#111111;font-weight:normal;">Bova (Legal)</div><div class="t" style="left:1457.1px;top:512.76px;font-size:23.2px;line-height:29.0px;color:#111111;font-weight:normal;">239/MLS/2025 ( Tagihan Biaya Air, Perawatan</div><div class="t" style="left:1457.1px;top:545.46px;font-size:23.2px;line-height:29.0px;color:#111111;font-weight:normal;">Gedung &amp; Listrik Ruko Batununggal )</div><div class="t" style="left:2015.7px;top:512.76px;font-size:23.2px;line-height:29.0px;color:#111111;font-weight:normal;">IDR</div><div class="t" style="right:618.3000000000002px;top:512.76px;font-size:23.2px;line-height:29.0px;color:#111111;font-weight:normal;text-align:right;">1.00</div><div class="t" style="right:406.5px;top:512.76px;font-size:23.2px;line-height:29.0px;color:#111111;font-weight:normal;text-align:right;">1,542,267.00</div><div class="t" style="right:282.0999999999999px;top:512.76px;font-size:23.2px;line-height:29.0px;color:#111111;font-weight:normal;text-align:right;">1</div><div class="t" style="left:2620.4px;top:516.16px;font-size:23.2px;line-height:29.0px;color:#111111;font-weight:normal;transform:scaleX(0.85);transform-origin:0 0;">E</div><svg style="position:absolute;left:2750.5px;top:516.4px;overflow:visible;" width="23.6" height="18" viewBox="0 0 23.6 18"><path d="M1.4 1.3 H22.2 M1.4 6.3 H22.2 M1.4 11.3 H22.2 M1.4 16.3 H22.2" stroke="#5599cf" stroke-width="2.8" stroke-linecap="round"/></svg><svg style="position:absolute;left:2790.2px;top:510.6px;overflow:visible;" width="24" height="26" viewBox="0 0 24 26"><path d="M0.8 5.6 H23" stroke="#5599cf" stroke-width="2.2" stroke-linecap="round"/><path d="M6.4 5.4 L7.8 2 Q8.2 1.1 9.2 1.1 H14.6 Q15.6 1.1 16 2 L17.4 5.4" fill="none" stroke="#5599cf" stroke-width="2"/><path d="M3.3 6 V22.9 Q3.3 25 5.4 25 H18.1 Q20.2 25 20.2 22.9 V6" fill="none" stroke="#5599cf" stroke-width="2.1"/><path d="M7.7 10.2 V19.8 M11.8 10.2 V19.8 M16 10.2 V19.8" stroke="#5599cf" stroke-width="2" stroke-linecap="round"/></svg><div style="position:absolute;left:410.3px;top:609.2px;width:27.4px;height:27.4px;box-sizing:border-box;border:1.3px solid #c8c8c8;background:#fafafa;box-shadow:0 1px 2px rgba(0,0,0,0.06);"></div><div class="t" style="right:2310.5px;top:607.26px;font-size:23.2px;line-height:29.0px;color:#111111;font-weight:normal;text-align:right;">4</div><div class="t" style="left:590.1px;top:607.26px;font-size:23.2px;line-height:29.0px;color:#337ab7;font-weight:normal;letter-spacing:-0.37px;">162-BC885-K-SDL-092025</div><div class="t" style="left:930.7px;top:607.26px;font-size:23.2px;line-height:29.0px;color:#111111;font-weight:normal;letter-spacing:0.6px;">30/09/2025</div><div class="t" style="left:1091.7px;top:607.26px;font-size:23.2px;line-height:29.0px;color:#111111;font-weight:normal;">00</div><div class="t" style="left:1188.2px;top:607.26px;font-size:23.2px;line-height:29.0px;color:#111111;font-weight:normal;">Eko Sulistiyo</div><div class="t" style="left:1457.1px;top:607.26px;font-size:23.2px;line-height:29.0px;color:#111111;font-weight:normal;">HQ.2.C utk 5 Dok</div><div class="t" style="left:2015.7px;top:607.26px;font-size:23.2px;line-height:29.0px;color:#111111;font-weight:normal;">IDR</div><div class="t" style="right:618.3000000000002px;top:607.26px;font-size:23.2px;line-height:29.0px;color:#111111;font-weight:normal;text-align:right;">1.00</div><div class="t" style="right:406.5px;top:607.26px;font-size:23.2px;line-height:29.0px;color:#111111;font-weight:normal;text-align:right;">50,000,000.00</div><div class="t" style="right:281.0999999999999px;top:607.26px;font-size:23.2px;line-height:29.0px;color:#111111;font-weight:normal;text-align:right;">5</div><div class="t" style="left:2620.4px;top:610.66px;font-size:23.2px;line-height:29.0px;color:#111111;font-weight:normal;transform:scaleX(0.85);transform-origin:0 0;">E</div><svg style="position:absolute;left:2750.5px;top:610.9px;overflow:visible;" width="23.6" height="18" viewBox="0 0 23.6 18"><path d="M1.4 1.3 H22.2 M1.4 6.3 H22.2 M1.4 11.3 H22.2 M1.4 16.3 H22.2" stroke="#5599cf" stroke-width="2.8" stroke-linecap="round"/></svg><svg style="position:absolute;left:2790.2px;top:605.1px;overflow:visible;" width="24" height="26" viewBox="0 0 24 26"><path d="M0.8 5.6 H23" stroke="#5599cf" stroke-width="2.2" stroke-linecap="round"/><path d="M6.4 5.4 L7.8 2 Q8.2 1.1 9.2 1.1 H14.6 Q15.6 1.1 16 2 L17.4 5.4" fill="none" stroke="#5599cf" stroke-width="2"/><path d="M3.3 6 V22.9 Q3.3 25 5.4 25 H18.1 Q20.2 25 20.2 22.9 V6" fill="none" stroke="#5599cf" stroke-width="2.1"/><path d="M7.7 10.2 V19.8 M11.8 10.2 V19.8 M16 10.2 V19.8" stroke="#5599cf" stroke-width="2" stroke-linecap="round"/></svg><div style="position:absolute;left:410.3px;top:675.4000000000001px;width:27.4px;height:27.4px;box-sizing:border-box;border:1.3px solid #c8c8c8;background:#fafafa;box-shadow:0 1px 2px rgba(0,0,0,0.06);"></div><div class="t" style="right:2310.5px;top:673.46px;font-size:23.2px;line-height:29.0px;color:#111111;font-weight:normal;text-align:right;">5</div><div class="t" style="left:590.1px;top:673.46px;font-size:23.2px;line-height:29.0px;color:#337ab7;font-weight:normal;letter-spacing:-0.37px;">240-BC05-K-092025</div><div class="t" style="left:930.7px;top:673.46px;font-size:23.2px;line-height:29.0px;color:#111111;font-weight:normal;letter-spacing:0.6px;">30/09/2025</div><div class="t" style="left:1091.7px;top:673.46px;font-size:23.2px;line-height:29.0px;color:#111111;font-weight:normal;">00</div><div class="t" style="left:1188.2px;top:673.46px;font-size:23.2px;line-height:29.0px;color:#111111;font-weight:normal;">CV Aldric Synergy</div><div class="t" style="left:1188.2px;top:706.16px;font-size:23.2px;line-height:29.0px;color:#111111;font-weight:normal;">Abadi</div><div class="t" style="left:1457.1px;top:673.46px;font-size:23.2px;line-height:29.0px;color:#111111;font-weight:normal;">SI-ASA-2509/0000690 ( White Print Head Cable</div><div class="t" style="left:1457.1px;top:706.16px;font-size:23.2px;line-height:29.0px;color:#111111;font-weight:normal;">utk Mesin Sublim )</div><div class="t" style="left:2015.7px;top:673.46px;font-size:23.2px;line-height:29.0px;color:#111111;font-weight:normal;">IDR</div><div class="t" style="right:618.3000000000002px;top:673.46px;font-size:23.2px;line-height:29.0px;color:#111111;font-weight:normal;text-align:right;">1.00</div><div class="t" style="right:406.5px;top:673.46px;font-size:23.2px;line-height:29.0px;color:#111111;font-weight:normal;text-align:right;">680,000.00</div><div class="t" style="right:282.0999999999999px;top:673.46px;font-size:23.2px;line-height:29.0px;color:#111111;font-weight:normal;text-align:right;">1</div><div class="t" style="left:2620.4px;top:676.86px;font-size:23.2px;line-height:29.0px;color:#111111;font-weight:normal;transform:scaleX(0.85);transform-origin:0 0;">E</div><svg style="position:absolute;left:2750.5px;top:677.1px;overflow:visible;" width="23.6" height="18" viewBox="0 0 23.6 18"><path d="M1.4 1.3 H22.2 M1.4 6.3 H22.2 M1.4 11.3 H22.2 M1.4 16.3 H22.2" stroke="#5599cf" stroke-width="2.8" stroke-linecap="round"/></svg><svg style="position:absolute;left:2790.2px;top:671.3000000000001px;overflow:visible;" width="24" height="26" viewBox="0 0 24 26"><path d="M0.8 5.6 H23" stroke="#5599cf" stroke-width="2.2" stroke-linecap="round"/><path d="M6.4 5.4 L7.8 2 Q8.2 1.1 9.2 1.1 H14.6 Q15.6 1.1 16 2 L17.4 5.4" fill="none" stroke="#5599cf" stroke-width="2"/><path d="M3.3 6 V22.9 Q3.3 25 5.4 25 H18.1 Q20.2 25 20.2 22.9 V6" fill="none" stroke="#5599cf" stroke-width="2.1"/><path d="M7.7 10.2 V19.8 M11.8 10.2 V19.8 M16 10.2 V19.8" stroke="#5599cf" stroke-width="2" stroke-linecap="round"/></svg><div style="position:absolute;left:410.3px;top:770.7px;width:27.4px;height:27.4px;box-sizing:border-box;border:1.3px solid #c8c8c8;background:#fafafa;box-shadow:0 1px 2px rgba(0,0,0,0.06);"></div><div class="t" style="right:2310.5px;top:768.76px;font-size:23.2px;line-height:29.0px;color:#111111;font-weight:normal;text-align:right;">6</div><div class="t" style="left:590.1px;top:768.76px;font-size:23.2px;line-height:29.0px;color:#337ab7;font-weight:normal;letter-spacing:-0.37px;">239-BC05-K-092025</div><div class="t" style="left:930.7px;top:768.76px;font-size:23.2px;line-height:29.0px;color:#111111;font-weight:normal;letter-spacing:0.6px;">30/09/2025</div><div class="t" style="left:1091.7px;top:768.76px;font-size:23.2px;line-height:29.0px;color:#111111;font-weight:normal;">00</div><div class="t" style="left:1188.2px;top:768.76px;font-size:23.2px;line-height:29.0px;color:#111111;font-weight:normal;">CV Aldric Synergy</div><div class="t" style="left:1188.2px;top:801.46px;font-size:23.2px;line-height:29.0px;color:#111111;font-weight:normal;">Abadi</div><div class="t" style="left:1457.1px;top:768.76px;font-size:23.2px;line-height:29.0px;color:#111111;font-weight:normal;">SI-ASA-2509/0000183 ( Damper &amp; White Print</div><div class="t" style="left:1457.1px;top:801.46px;font-size:23.2px;line-height:29.0px;color:#111111;font-weight:normal;">Head Mesin Sublim )</div><div class="t" style="left:2015.7px;top:768.76px;font-size:23.2px;line-height:29.0px;color:#111111;font-weight:normal;">IDR</div><div class="t" style="right:618.3000000000002px;top:768.76px;font-size:23.2px;line-height:29.0px;color:#111111;font-weight:normal;text-align:right;">1.00</div><div class="t" style="right:406.5px;top:768.76px;font-size:23.2px;line-height:29.0px;color:#111111;font-weight:normal;text-align:right;">8,160,000.00</div><div class="t" style="right:282.0999999999999px;top:768.76px;font-size:23.2px;line-height:29.0px;color:#111111;font-weight:normal;text-align:right;">1</div><div class="t" style="left:2620.4px;top:772.16px;font-size:23.2px;line-height:29.0px;color:#111111;font-weight:normal;transform:scaleX(0.85);transform-origin:0 0;">E</div><svg style="position:absolute;left:2750.5px;top:772.4px;overflow:visible;" width="23.6" height="18" viewBox="0 0 23.6 18"><path d="M1.4 1.3 H22.2 M1.4 6.3 H22.2 M1.4 11.3 H22.2 M1.4 16.3 H22.2" stroke="#5599cf" stroke-width="2.8" stroke-linecap="round"/></svg><svg style="position:absolute;left:2790.2px;top:766.6px;overflow:visible;" width="24" height="26" viewBox="0 0 24 26"><path d="M0.8 5.6 H23" stroke="#5599cf" stroke-width="2.2" stroke-linecap="round"/><path d="M6.4 5.4 L7.8 2 Q8.2 1.1 9.2 1.1 H14.6 Q15.6 1.1 16 2 L17.4 5.4" fill="none" stroke="#5599cf" stroke-width="2"/><path d="M3.3 6 V22.9 Q3.3 25 5.4 25 H18.1 Q20.2 25 20.2 22.9 V6" fill="none" stroke="#5599cf" stroke-width="2.1"/><path d="M7.7 10.2 V19.8 M11.8 10.2 V19.8 M16 10.2 V19.8" stroke="#5599cf" stroke-width="2" stroke-linecap="round"/></svg><div style="position:absolute;left:410.3px;top:865.9000000000001px;width:27.4px;height:27.4px;box-sizing:border-box;border:1.3px solid #c8c8c8;background:#fafafa;box-shadow:0 1px 2px rgba(0,0,0,0.06);"></div><div class="t" style="right:2310.5px;top:863.96px;font-size:23.2px;line-height:29.0px;color:#111111;font-weight:normal;text-align:right;">7</div><div class="t" style="left:590.1px;top:863.96px;font-size:23.2px;line-height:29.0px;color:#337ab7;font-weight:normal;letter-spacing:-0.37px;">238-BC05-K-092025</div><div class="t" style="left:930.7px;top:863.96px;font-size:23.2px;line-height:29.0px;color:#111111;font-weight:normal;letter-spacing:0.6px;">30/09/2025</div><div class="t" style="left:1091.7px;top:863.96px;font-size:23.2px;line-height:29.0px;color:#111111;font-weight:normal;">00</div><div class="t" style="left:1188.2px;top:863.96px;font-size:23.2px;line-height:29.0px;color:#111111;font-weight:normal;">CV Aldric Synergy</div><div class="t" style="left:1188.2px;top:896.66px;font-size:23.2px;line-height:29.0px;color:#111111;font-weight:normal;">Abadi</div><div class="t" style="left:1457.1px;top:863.96px;font-size:23.2px;line-height:29.0px;color:#111111;font-weight:normal;">SI-SRV-2509/0000011 ( Jasa Perbaikan )</div><div class="t" style="left:2015.7px;top:863.96px;font-size:23.2px;line-height:29.0px;color:#111111;font-weight:normal;">IDR</div><div class="t" style="right:618.3000000000002px;top:863.96px;font-size:23.2px;line-height:29.0px;color:#111111;font-weight:normal;text-align:right;">1.00</div><div class="t" style="right:406.5px;top:863.96px;font-size:23.2px;line-height:29.0px;color:#111111;font-weight:normal;text-align:right;">150,000.00</div><div class="t" style="right:282.0999999999999px;top:863.96px;font-size:23.2px;line-height:29.0px;color:#111111;font-weight:normal;text-align:right;">1</div><div class="t" style="left:2620.4px;top:867.36px;font-size:23.2px;line-height:29.0px;color:#111111;font-weight:normal;transform:scaleX(0.85);transform-origin:0 0;">E</div><svg style="position:absolute;left:2750.5px;top:867.6px;overflow:visible;" width="23.6" height="18" viewBox="0 0 23.6 18"><path d="M1.4 1.3 H22.2 M1.4 6.3 H22.2 M1.4 11.3 H22.2 M1.4 16.3 H22.2" stroke="#5599cf" stroke-width="2.8" stroke-linecap="round"/></svg><svg style="position:absolute;left:2790.2px;top:861.8000000000001px;overflow:visible;" width="24" height="26" viewBox="0 0 24 26"><path d="M0.8 5.6 H23" stroke="#5599cf" stroke-width="2.2" stroke-linecap="round"/><path d="M6.4 5.4 L7.8 2 Q8.2 1.1 9.2 1.1 H14.6 Q15.6 1.1 16 2 L17.4 5.4" fill="none" stroke="#5599cf" stroke-width="2"/><path d="M3.3 6 V22.9 Q3.3 25 5.4 25 H18.1 Q20.2 25 20.2 22.9 V6" fill="none" stroke="#5599cf" stroke-width="2.1"/><path d="M7.7 10.2 V19.8 M11.8 10.2 V19.8 M16 10.2 V19.8" stroke="#5599cf" stroke-width="2" stroke-linecap="round"/></svg><div style="position:absolute;left:410.3px;top:960.4000000000001px;width:27.4px;height:27.4px;box-sizing:border-box;border:1.3px solid #c8c8c8;background:#fafafa;box-shadow:0 1px 2px rgba(0,0,0,0.06);"></div><div class="t" style="right:2310.5px;top:958.46px;font-size:23.2px;line-height:29.0px;color:#111111;font-weight:normal;text-align:right;">8</div><div class="t" style="left:590.1px;top:958.46px;font-size:23.2px;line-height:29.0px;color:#337ab7;font-weight:normal;letter-spacing:-0.37px;">237-BC05-K-092025</div><div class="t" style="left:930.7px;top:958.46px;font-size:23.2px;line-height:29.0px;color:#111111;font-weight:normal;letter-spacing:0.6px;">30/09/2025</div><div class="t" style="left:1091.7px;top:958.46px;font-size:23.2px;line-height:29.0px;color:#111111;font-weight:normal;">00</div><div class="t" style="left:1188.2px;top:958.46px;font-size:23.2px;line-height:29.0px;color:#111111;font-weight:normal;">CV Aldric Synergy</div><div class="t" style="left:1188.2px;top:991.16px;font-size:23.2px;line-height:29.0px;color:#111111;font-weight:normal;">Abadi</div><div class="t" style="left:1457.1px;top:958.46px;font-size:23.2px;line-height:29.0px;color:#111111;font-weight:normal;">SI-SRV-2509/0000010 ( Jasa Perbaikan )</div><div class="t" style="left:2015.7px;top:958.46px;font-size:23.2px;line-height:29.0px;color:#111111;font-weight:normal;">IDR</div><div class="t" style="right:618.3000000000002px;top:958.46px;font-size:23.2px;line-height:29.0px;color:#111111;font-weight:normal;text-align:right;">1.00</div><div class="t" style="right:406.5px;top:958.46px;font-size:23.2px;line-height:29.0px;color:#111111;font-weight:normal;text-align:right;">150,000.00</div><div class="t" style="right:282.0999999999999px;top:958.46px;font-size:23.2px;line-height:29.0px;color:#111111;font-weight:normal;text-align:right;">1</div><div class="t" style="left:2620.4px;top:961.86px;font-size:23.2px;line-height:29.0px;color:#111111;font-weight:normal;transform:scaleX(0.85);transform-origin:0 0;">E</div><svg style="position:absolute;left:2750.5px;top:962.1px;overflow:visible;" width="23.6" height="18" viewBox="0 0 23.6 18"><path d="M1.4 1.3 H22.2 M1.4 6.3 H22.2 M1.4 11.3 H22.2 M1.4 16.3 H22.2" stroke="#5599cf" stroke-width="2.8" stroke-linecap="round"/></svg><svg style="position:absolute;left:2790.2px;top:956.3000000000001px;overflow:visible;" width="24" height="26" viewBox="0 0 24 26"><path d="M0.8 5.6 H23" stroke="#5599cf" stroke-width="2.2" stroke-linecap="round"/><path d="M6.4 5.4 L7.8 2 Q8.2 1.1 9.2 1.1 H14.6 Q15.6 1.1 16 2 L17.4 5.4" fill="none" stroke="#5599cf" stroke-width="2"/><path d="M3.3 6 V22.9 Q3.3 25 5.4 25 H18.1 Q20.2 25 20.2 22.9 V6" fill="none" stroke="#5599cf" stroke-width="2.1"/><path d="M7.7 10.2 V19.8 M11.8 10.2 V19.8 M16 10.2 V19.8" stroke="#5599cf" stroke-width="2" stroke-linecap="round"/></svg><div style="position:absolute;left:410.3px;top:1054.6000000000001px;width:27.4px;height:27.4px;box-sizing:border-box;border:1.3px solid #c8c8c8;background:#fafafa;box-shadow:0 1px 2px rgba(0,0,0,0.06);"></div><div class="t" style="right:2310.5px;top:1052.66px;font-size:23.2px;line-height:29.0px;color:#111111;font-weight:normal;text-align:right;">9</div><div class="t" style="left:590.1px;top:1052.66px;font-size:23.2px;line-height:29.0px;color:#337ab7;font-weight:normal;letter-spacing:-0.37px;">236-BC05-K-092025</div><div class="t" style="left:930.7px;top:1052.66px;font-size:23.2px;line-height:29.0px;color:#111111;font-weight:normal;letter-spacing:0.6px;">30/09/2025</div><div class="t" style="left:1091.7px;top:1052.66px;font-size:23.2px;line-height:29.0px;color:#111111;font-weight:normal;">00</div><div class="t" style="left:1188.2px;top:1052.66px;font-size:23.2px;line-height:29.0px;color:#111111;font-weight:normal;">CV Aldric Synergy</div><div class="t" style="left:1188.2px;top:1085.36px;font-size:23.2px;line-height:29.0px;color:#111111;font-weight:normal;">Abadi</div><div class="t" style="left:1457.1px;top:1052.66px;font-size:23.2px;line-height:29.0px;color:#111111;font-weight:normal;">SI-CVASA-2508/0000034 ( Temperatur Control</div><div class="t" style="left:1457.1px;top:1085.36px;font-size:23.2px;line-height:29.0px;color:#111111;font-weight:normal;">Mesin Sublim )</div><div class="t" style="left:2015.7px;top:1052.66px;font-size:23.2px;line-height:29.0px;color:#111111;font-weight:normal;">IDR</div><div class="t" style="right:618.3000000000002px;top:1052.66px;font-size:23.2px;line-height:29.0px;color:#111111;font-weight:normal;text-align:right;">1.00</div><div class="t" style="right:406.5px;top:1052.66px;font-size:23.2px;line-height:29.0px;color:#111111;font-weight:normal;text-align:right;">900,000.00</div><div class="t" style="right:282.0999999999999px;top:1052.66px;font-size:23.2px;line-height:29.0px;color:#111111;font-weight:normal;text-align:right;">1</div><div class="t" style="left:2620.4px;top:1056.06px;font-size:23.2px;line-height:29.0px;color:#111111;font-weight:normal;transform:scaleX(0.85);transform-origin:0 0;">E</div><svg style="position:absolute;left:2750.5px;top:1056.3000000000002px;overflow:visible;" width="23.6" height="18" viewBox="0 0 23.6 18"><path d="M1.4 1.3 H22.2 M1.4 6.3 H22.2 M1.4 11.3 H22.2 M1.4 16.3 H22.2" stroke="#5599cf" stroke-width="2.8" stroke-linecap="round"/></svg><svg style="position:absolute;left:2790.2px;top:1050.5px;overflow:visible;" width="24" height="26" viewBox="0 0 24 26"><path d="M0.8 5.6 H23" stroke="#5599cf" stroke-width="2.2" stroke-linecap="round"/><path d="M6.4 5.4 L7.8 2 Q8.2 1.1 9.2 1.1 H14.6 Q15.6 1.1 16 2 L17.4 5.4" fill="none" stroke="#5599cf" stroke-width="2"/><path d="M3.3 6 V22.9 Q3.3 25 5.4 25 H18.1 Q20.2 25 20.2 22.9 V6" fill="none" stroke="#5599cf" stroke-width="2.1"/><path d="M7.7 10.2 V19.8 M11.8 10.2 V19.8 M16 10.2 V19.8" stroke="#5599cf" stroke-width="2" stroke-linecap="round"/></svg><div style="position:absolute;left:410.3px;top:1149.8px;width:27.4px;height:27.4px;box-sizing:border-box;border:1.3px solid #c8c8c8;background:#fafafa;box-shadow:0 1px 2px rgba(0,0,0,0.06);"></div><div class="t" style="right:2310.5px;top:1147.86px;font-size:23.2px;line-height:29.0px;color:#111111;font-weight:normal;text-align:right;">10</div><div class="t" style="left:590.1px;top:1147.86px;font-size:23.2px;line-height:29.0px;color:#337ab7;font-weight:normal;letter-spacing:-0.37px;">029-NSA-K-092025</div><div class="t" style="left:930.7px;top:1147.86px;font-size:23.2px;line-height:29.0px;color:#111111;font-weight:normal;letter-spacing:0.6px;">30/09/2025</div><div class="t" style="left:1091.7px;top:1147.86px;font-size:23.2px;line-height:29.0px;color:#111111;font-weight:normal;">00</div><div class="t" style="left:1188.2px;top:1147.86px;font-size:23.2px;line-height:29.0px;color:#111111;font-weight:normal;">33</div><div class="t" style="left:1457.1px;top:1147.86px;font-size:23.2px;line-height:29.0px;color:#111111;font-weight:normal;">DP kontainer LS 204 ( kode 33 )</div><div class="t" style="left:2015.7px;top:1147.86px;font-size:23.2px;line-height:29.0px;color:#111111;font-weight:normal;">IDR</div><div class="t" style="right:618.3000000000002px;top:1147.86px;font-size:23.2px;line-height:29.0px;color:#111111;font-weight:normal;text-align:right;">1.00</div><div class="t" style="right:406.5px;top:1147.86px;font-size:23.2px;line-height:29.0px;color:#111111;font-weight:normal;text-align:right;">185,002,500.00</div><div class="t" style="right:281.0999999999999px;top:1147.86px;font-size:23.2px;line-height:29.0px;color:#111111;font-weight:normal;text-align:right;">2</div><div class="t" style="left:2620.4px;top:1151.26px;font-size:23.2px;line-height:29.0px;color:#111111;font-weight:normal;transform:scaleX(0.85);transform-origin:0 0;">E</div><svg style="position:absolute;left:2750.5px;top:1151.5px;overflow:visible;" width="23.6" height="18" viewBox="0 0 23.6 18"><path d="M1.4 1.3 H22.2 M1.4 6.3 H22.2 M1.4 11.3 H22.2 M1.4 16.3 H22.2" stroke="#5599cf" stroke-width="2.8" stroke-linecap="round"/></svg><svg style="position:absolute;left:2790.2px;top:1145.6999999999998px;overflow:visible;" width="24" height="26" viewBox="0 0 24 26"><path d="M0.8 5.6 H23" stroke="#5599cf" stroke-width="2.2" stroke-linecap="round"/><path d="M6.4 5.4 L7.8 2 Q8.2 1.1 9.2 1.1 H14.6 Q15.6 1.1 16 2 L17.4 5.4" fill="none" stroke="#5599cf" stroke-width="2"/><path d="M3.3 6 V22.9 Q3.3 25 5.4 25 H18.1 Q20.2 25 20.2 22.9 V6" fill="none" stroke="#5599cf" stroke-width="2.1"/><path d="M7.7 10.2 V19.8 M11.8 10.2 V19.8 M16 10.2 V19.8" stroke="#5599cf" stroke-width="2" stroke-linecap="round"/></svg><div style="position:absolute;left:410.3px;top:1215.6000000000001px;width:27.4px;height:27.4px;box-sizing:border-box;border:1.3px solid #c8c8c8;background:#fafafa;box-shadow:0 1px 2px rgba(0,0,0,0.06);"></div><div class="t" style="right:2310.5px;top:1213.66px;font-size:23.2px;line-height:29.0px;color:#111111;font-weight:normal;text-align:right;">11</div><div class="t" style="left:590.1px;top:1213.66px;font-size:23.2px;line-height:29.0px;color:#337ab7;font-weight:normal;letter-spacing:-0.37px;">018-WSH-K-092025</div><div class="t" style="left:930.7px;top:1213.66px;font-size:23.2px;line-height:29.0px;color:#111111;font-weight:normal;letter-spacing:0.6px;">30/09/2025</div><div class="t" style="left:1091.7px;top:1213.66px;font-size:23.2px;line-height:29.0px;color:#111111;font-weight:normal;">00</div><div class="t" style="left:1188.2px;top:1213.66px;font-size:23.2px;line-height:29.0px;color:#111111;font-weight:normal;">33</div><div class="t" style="left:1457.1px;top:1213.66px;font-size:23.2px;line-height:29.0px;color:#111111;font-weight:normal;">DP kontainer WS 328 ( kode 33 )</div><div class="t" style="left:2015.7px;top:1213.66px;font-size:23.2px;line-height:29.0px;color:#111111;font-weight:normal;">IDR</div><div class="t" style="right:618.3000000000002px;top:1213.66px;font-size:23.2px;line-height:29.0px;color:#111111;font-weight:normal;text-align:right;">1.00</div><div class="t" style="right:406.5px;top:1213.66px;font-size:23.2px;line-height:29.0px;color:#111111;font-weight:normal;text-align:right;">185,002,500.00</div><div class="t" style="right:281.0999999999999px;top:1213.66px;font-size:23.2px;line-height:29.0px;color:#111111;font-weight:normal;text-align:right;">2</div><div class="t" style="left:2620.4px;top:1217.06px;font-size:23.2px;line-height:29.0px;color:#111111;font-weight:normal;transform:scaleX(0.85);transform-origin:0 0;">E</div><svg style="position:absolute;left:2750.5px;top:1217.3000000000002px;overflow:visible;" width="23.6" height="18" viewBox="0 0 23.6 18"><path d="M1.4 1.3 H22.2 M1.4 6.3 H22.2 M1.4 11.3 H22.2 M1.4 16.3 H22.2" stroke="#5599cf" stroke-width="2.8" stroke-linecap="round"/></svg><svg style="position:absolute;left:2790.2px;top:1211.5px;overflow:visible;" width="24" height="26" viewBox="0 0 24 26"><path d="M0.8 5.6 H23" stroke="#5599cf" stroke-width="2.2" stroke-linecap="round"/><path d="M6.4 5.4 L7.8 2 Q8.2 1.1 9.2 1.1 H14.6 Q15.6 1.1 16 2 L17.4 5.4" fill="none" stroke="#5599cf" stroke-width="2"/><path d="M3.3 6 V22.9 Q3.3 25 5.4 25 H18.1 Q20.2 25 20.2 22.9 V6" fill="none" stroke="#5599cf" stroke-width="2.1"/><path d="M7.7 10.2 V19.8 M11.8 10.2 V19.8 M16 10.2 V19.8" stroke="#5599cf" stroke-width="2" stroke-linecap="round"/></svg><div style="position:absolute;left:410.3px;top:1282.7px;width:27.4px;height:27.4px;box-sizing:border-box;border:1.3px solid #c8c8c8;background:#fafafa;box-shadow:0 1px 2px rgba(0,0,0,0.06);"></div><div class="t" style="right:2310.5px;top:1280.76px;font-size:23.2px;line-height:29.0px;color:#111111;font-weight:normal;text-align:right;">12</div><div class="t" style="left:590.1px;top:1280.76px;font-size:23.2px;line-height:29.0px;color:#337ab7;font-weight:normal;letter-spacing:-0.37px;">017-WSH-K-092025</div><div class="t" style="left:930.7px;top:1280.76px;font-size:23.2px;line-height:29.0px;color:#111111;font-weight:normal;letter-spacing:0.6px;">30/09/2025</div><div class="t" style="left:1091.7px;top:1280.76px;font-size:23.2px;line-height:29.0px;color:#111111;font-weight:normal;">00</div><div class="t" style="left:1188.2px;top:1280.76px;font-size:23.2px;line-height:29.0px;color:#111111;font-weight:normal;">33</div><div class="t" style="left:1457.1px;top:1280.76px;font-size:23.2px;line-height:29.0px;color:#111111;font-weight:normal;">DP kontainer NA 001 ( kode 33 )</div><div class="t" style="left:2015.7px;top:1280.76px;font-size:23.2px;line-height:29.0px;color:#111111;font-weight:normal;">IDR</div><div class="t" style="right:618.3000000000002px;top:1280.76px;font-size:23.2px;line-height:29.0px;color:#111111;font-weight:normal;text-align:right;">1.00</div><div class="t" style="right:406.5px;top:1280.76px;font-size:23.2px;line-height:29.0px;color:#111111;font-weight:normal;text-align:right;">185,002,500.00</div><div class="t" style="right:281.0999999999999px;top:1280.76px;font-size:23.2px;line-height:29.0px;color:#111111;font-weight:normal;text-align:right;">2</div><div class="t" style="left:2620.4px;top:1284.16px;font-size:23.2px;line-height:29.0px;color:#111111;font-weight:normal;transform:scaleX(0.85);transform-origin:0 0;">E</div><svg style="position:absolute;left:2750.5px;top:1284.4px;overflow:visible;" width="23.6" height="18" viewBox="0 0 23.6 18"><path d="M1.4 1.3 H22.2 M1.4 6.3 H22.2 M1.4 11.3 H22.2 M1.4 16.3 H22.2" stroke="#5599cf" stroke-width="2.8" stroke-linecap="round"/></svg><svg style="position:absolute;left:2790.2px;top:1278.6px;overflow:visible;" width="24" height="26" viewBox="0 0 24 26"><path d="M0.8 5.6 H23" stroke="#5599cf" stroke-width="2.2" stroke-linecap="round"/><path d="M6.4 5.4 L7.8 2 Q8.2 1.1 9.2 1.1 H14.6 Q15.6 1.1 16 2 L17.4 5.4" fill="none" stroke="#5599cf" stroke-width="2"/><path d="M3.3 6 V22.9 Q3.3 25 5.4 25 H18.1 Q20.2 25 20.2 22.9 V6" fill="none" stroke="#5599cf" stroke-width="2.1"/><path d="M7.7 10.2 V19.8 M11.8 10.2 V19.8 M16 10.2 V19.8" stroke="#5599cf" stroke-width="2" stroke-linecap="round"/></svg></div></body></html>
